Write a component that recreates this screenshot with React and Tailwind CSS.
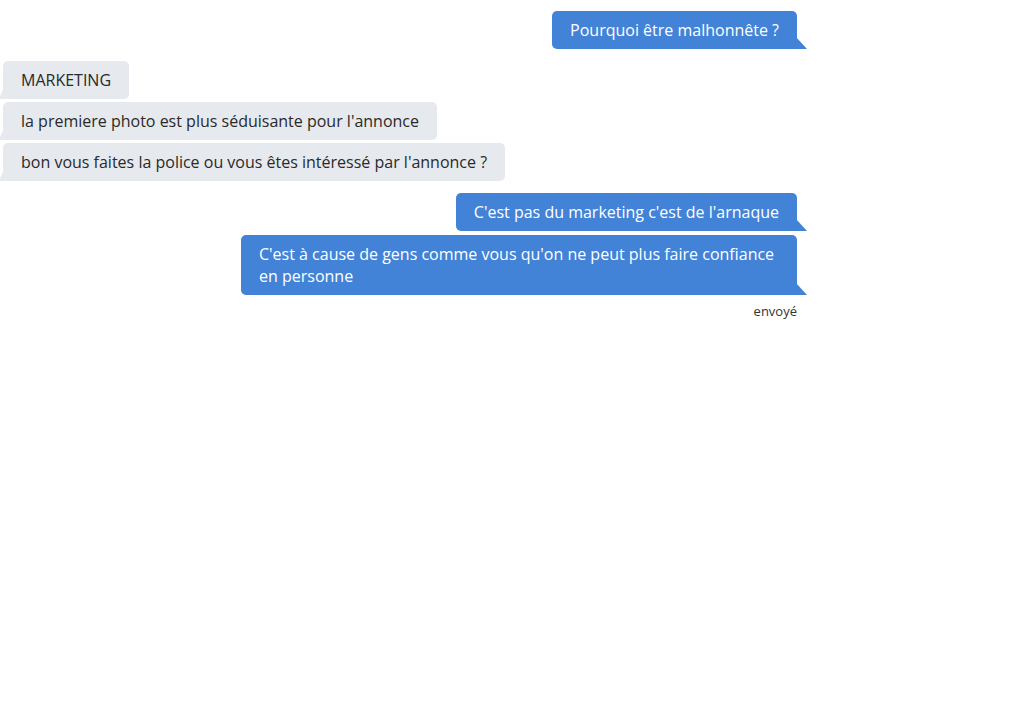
import React from "react";

function Out({ children, className = "" }) {
  return (
    <div className="flex justify-end pr-[11px]">
      <div className={`relative max-w-[556px] rounded-[5px] rounded-br-none bg-[#4283d8] px-[18px] py-[8px] text-[16px] leading-[22px] text-white ${className}`}>
        {children}
        <svg className="absolute bottom-0 right-[-10px]" width="11" height="12" viewBox="0 0 11 12">
          <polygon points="0,0 11,12 0,12" fill="#4283d8" />
        </svg>
      </div>
    </div>
  );
}

function In({ children }) {
  return (
    <div className="flex justify-start pl-[3px]">
      <div className="relative rounded-[5px] rounded-bl-none bg-[#e6e9ed] px-[18px] py-[8px] text-[16px] leading-[22px] text-[#2a2a2a]">
        {children}
        <svg className="absolute bottom-0 left-[-4px]" width="5" height="12" viewBox="0 0 5 12">
          <polygon points="5,0 5,12 0,12" fill="#e6e9ed" />
        </svg>
      </div>
    </div>
  );
}

export default function App() {
  return (
    <div className="h-[724px] w-[1024px] bg-white" style={{ fontFamily: '"Open Sans", "Noto Sans", sans-serif' }}>
      <div className="flex w-[808px] flex-col pt-[11px]">
        <Out>Pourquoi être malhonnête ?</Out>
        <div className="mt-[12px] flex flex-col gap-[3px]">
          <In>MARKETING</In>
          <In>la premiere photo est plus séduisante pour l'annonce</In>
          <In>bon vous faites la police ou vous êtes intéressé par l'annonce ?</In>
        </div>
        <div className="mt-[12px] flex flex-col gap-[4px]">
          <Out>C'est pas du marketing c'est de l'arnaque</Out>
          <Out>C'est à cause de gens comme vous qu'on ne peut plus faire confiance en personne</Out>
        </div>
        <div className="mt-[7px] pr-[11px] text-right text-[13px] leading-[18px] text-[#333]">envoyé</div>
      </div>
    </div>
  );
}
